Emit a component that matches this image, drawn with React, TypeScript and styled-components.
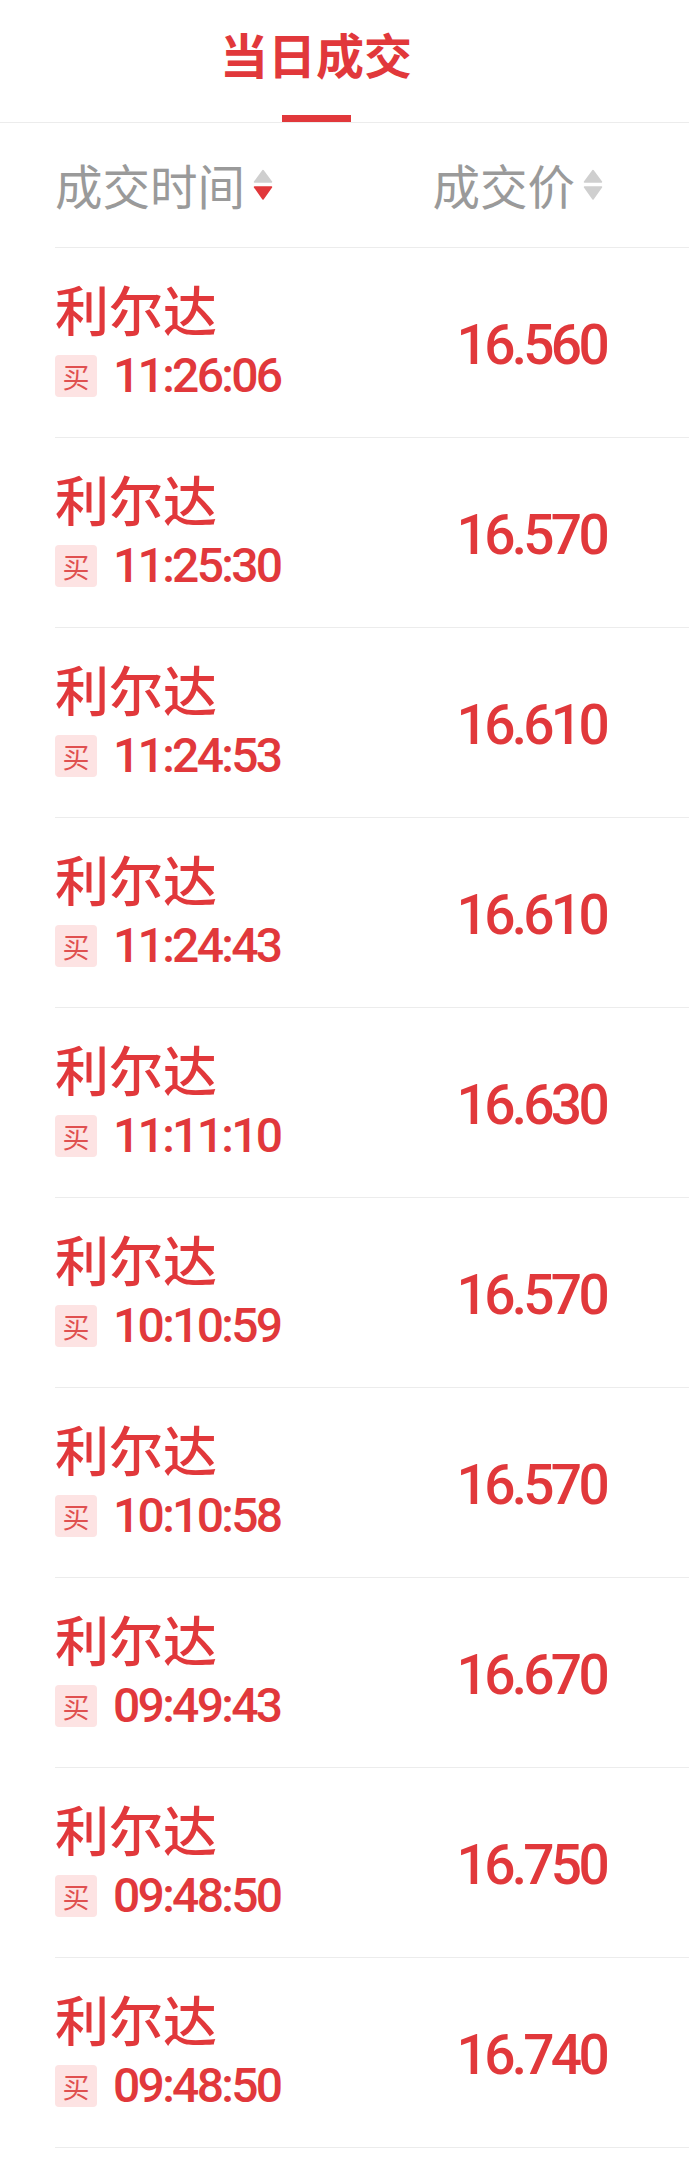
import styled, { createGlobalStyle } from "styled-components";

const GlobalStyle = createGlobalStyle`
  html, body {
    margin: 0;
    padding: 0;
    background: #fff;
  }
  body {
    font-family: "Noto Sans CJK SC", "Noto Sans", sans-serif;
  }
`;

const RED = "#e1383b";

const Page = styled.div`
  width: 689px;
  background: #fff;
`;

const TabBar = styled.div`
  display: flex;
  height: 123px;
  padding-left: 220px;
  border-bottom: 1px solid #ececec;
  box-sizing: border-box;
`;

const Tab = styled.div`
  display: flex;
  flex-direction: column;
  align-items: center;
`;

const TabTitle = styled.div`
  margin-top: 24px;
  font-size: 48px;
  line-height: 58px;
  font-weight: 700;
  color: ${RED};
`;

const TabLine = styled.div`
  margin-top: auto;
  width: 69px;
  height: 7px;
  background: ${RED};
`;

const List = styled.div`
  padding-left: 55px;
`;

const HeaderRow = styled.div`
  display: flex;
  align-items: center;
  justify-content: space-between;
  height: 125px;
  padding-right: 86px;
  border-bottom: 1px solid #ececec;
  box-sizing: border-box;
`;

const HeaderCell = styled.div`
  display: flex;
  align-items: center;
  gap: 8px;
  font-size: 47.5px;
  line-height: 56px;
  color: #9a9a9a;
`;

const Row = styled.div`
  display: flex;
  align-items: center;
  justify-content: space-between;
  height: 190px;
  padding-right: 83px;
  padding-bottom: 10px;
  border-bottom: 1px solid #ececec;
  box-sizing: border-box;
`;

const Left = styled.div`
  display: flex;
  flex-direction: column;
  gap: 15px;
`;

const Name = styled.div`
  font-size: 54px;
  line-height: 62px;
  font-weight: 500;
  color: ${RED};
`;

const TimeLine = styled.div`
  display: flex;
  align-items: center;
  gap: 16px;
  height: 42px;
`;

const Badge = styled.span`
  display: flex;
  align-items: center;
  justify-content: center;
  width: 42px;
  height: 42px;
  border-radius: 4px;
  background: #fde3e3;
  color: #e05050;
  font-size: 27px;
  line-height: 1;
`;

const Time = styled.span`
  font-family: Roboto, "Liberation Sans", sans-serif;
  font-size: 48px;
  line-height: 42px;
  font-weight: 500;
  letter-spacing: -2.7px;
  color: ${RED};
`;

const Price = styled.div`
  margin-top: 15px;
  font-family: Roboto, "Liberation Sans", sans-serif;
  font-size: 55px;
  line-height: 60px;
  font-weight: 500;
  letter-spacing: -3.7px;
  color: ${RED};
`;

type SortDir = "up" | "down" | null;

const GRAY = "#cfcfcf";

function SortIcon({ active }: { active: SortDir }) {
  const up = active === "up" ? RED : GRAY;
  const down = active === "down" ? RED : GRAY;
  return (
    <svg width="20" height="34" viewBox="0 0 20 34">
      <polygon points="10,2.5 18.5,14 1.5,14" fill={up} stroke={up} strokeWidth="1.5" strokeLinejoin="round" />
      <polygon points="1.5,19 18.5,19 10,31" fill={down} stroke={down} strokeWidth="1.5" strokeLinejoin="round" />
    </svg>
  );
}

const trades = [
  { time: "11:26:06", price: "16.560" },
  { time: "11:25:30", price: "16.570" },
  { time: "11:24:53", price: "16.610" },
  { time: "11:24:43", price: "16.610" },
  { time: "11:11:10", price: "16.630" },
  { time: "10:10:59", price: "16.570" },
  { time: "10:10:58", price: "16.570" },
  { time: "09:49:43", price: "16.670" },
  { time: "09:48:50", price: "16.750" },
  { time: "09:48:50", price: "16.740" },
];

export default function App() {
  return (
    <Page>
      <GlobalStyle />
      <TabBar>
        <Tab>
          <TabTitle>当日成交</TabTitle>
          <TabLine />
        </Tab>
      </TabBar>
      <List>
        <HeaderRow>
          <HeaderCell>
            成交时间
            <SortIcon active="down" />
          </HeaderCell>
          <HeaderCell>
            成交价
            <SortIcon active={null} />
          </HeaderCell>
        </HeaderRow>
        {trades.map((t, i) => (
          <Row key={i}>
            <Left>
              <Name>利尔达</Name>
              <TimeLine>
                <Badge>买</Badge>
                <Time>{t.time}</Time>
              </TimeLine>
            </Left>
            <Price>{t.price}</Price>
          </Row>
        ))}
      </List>
    </Page>
  );
}
